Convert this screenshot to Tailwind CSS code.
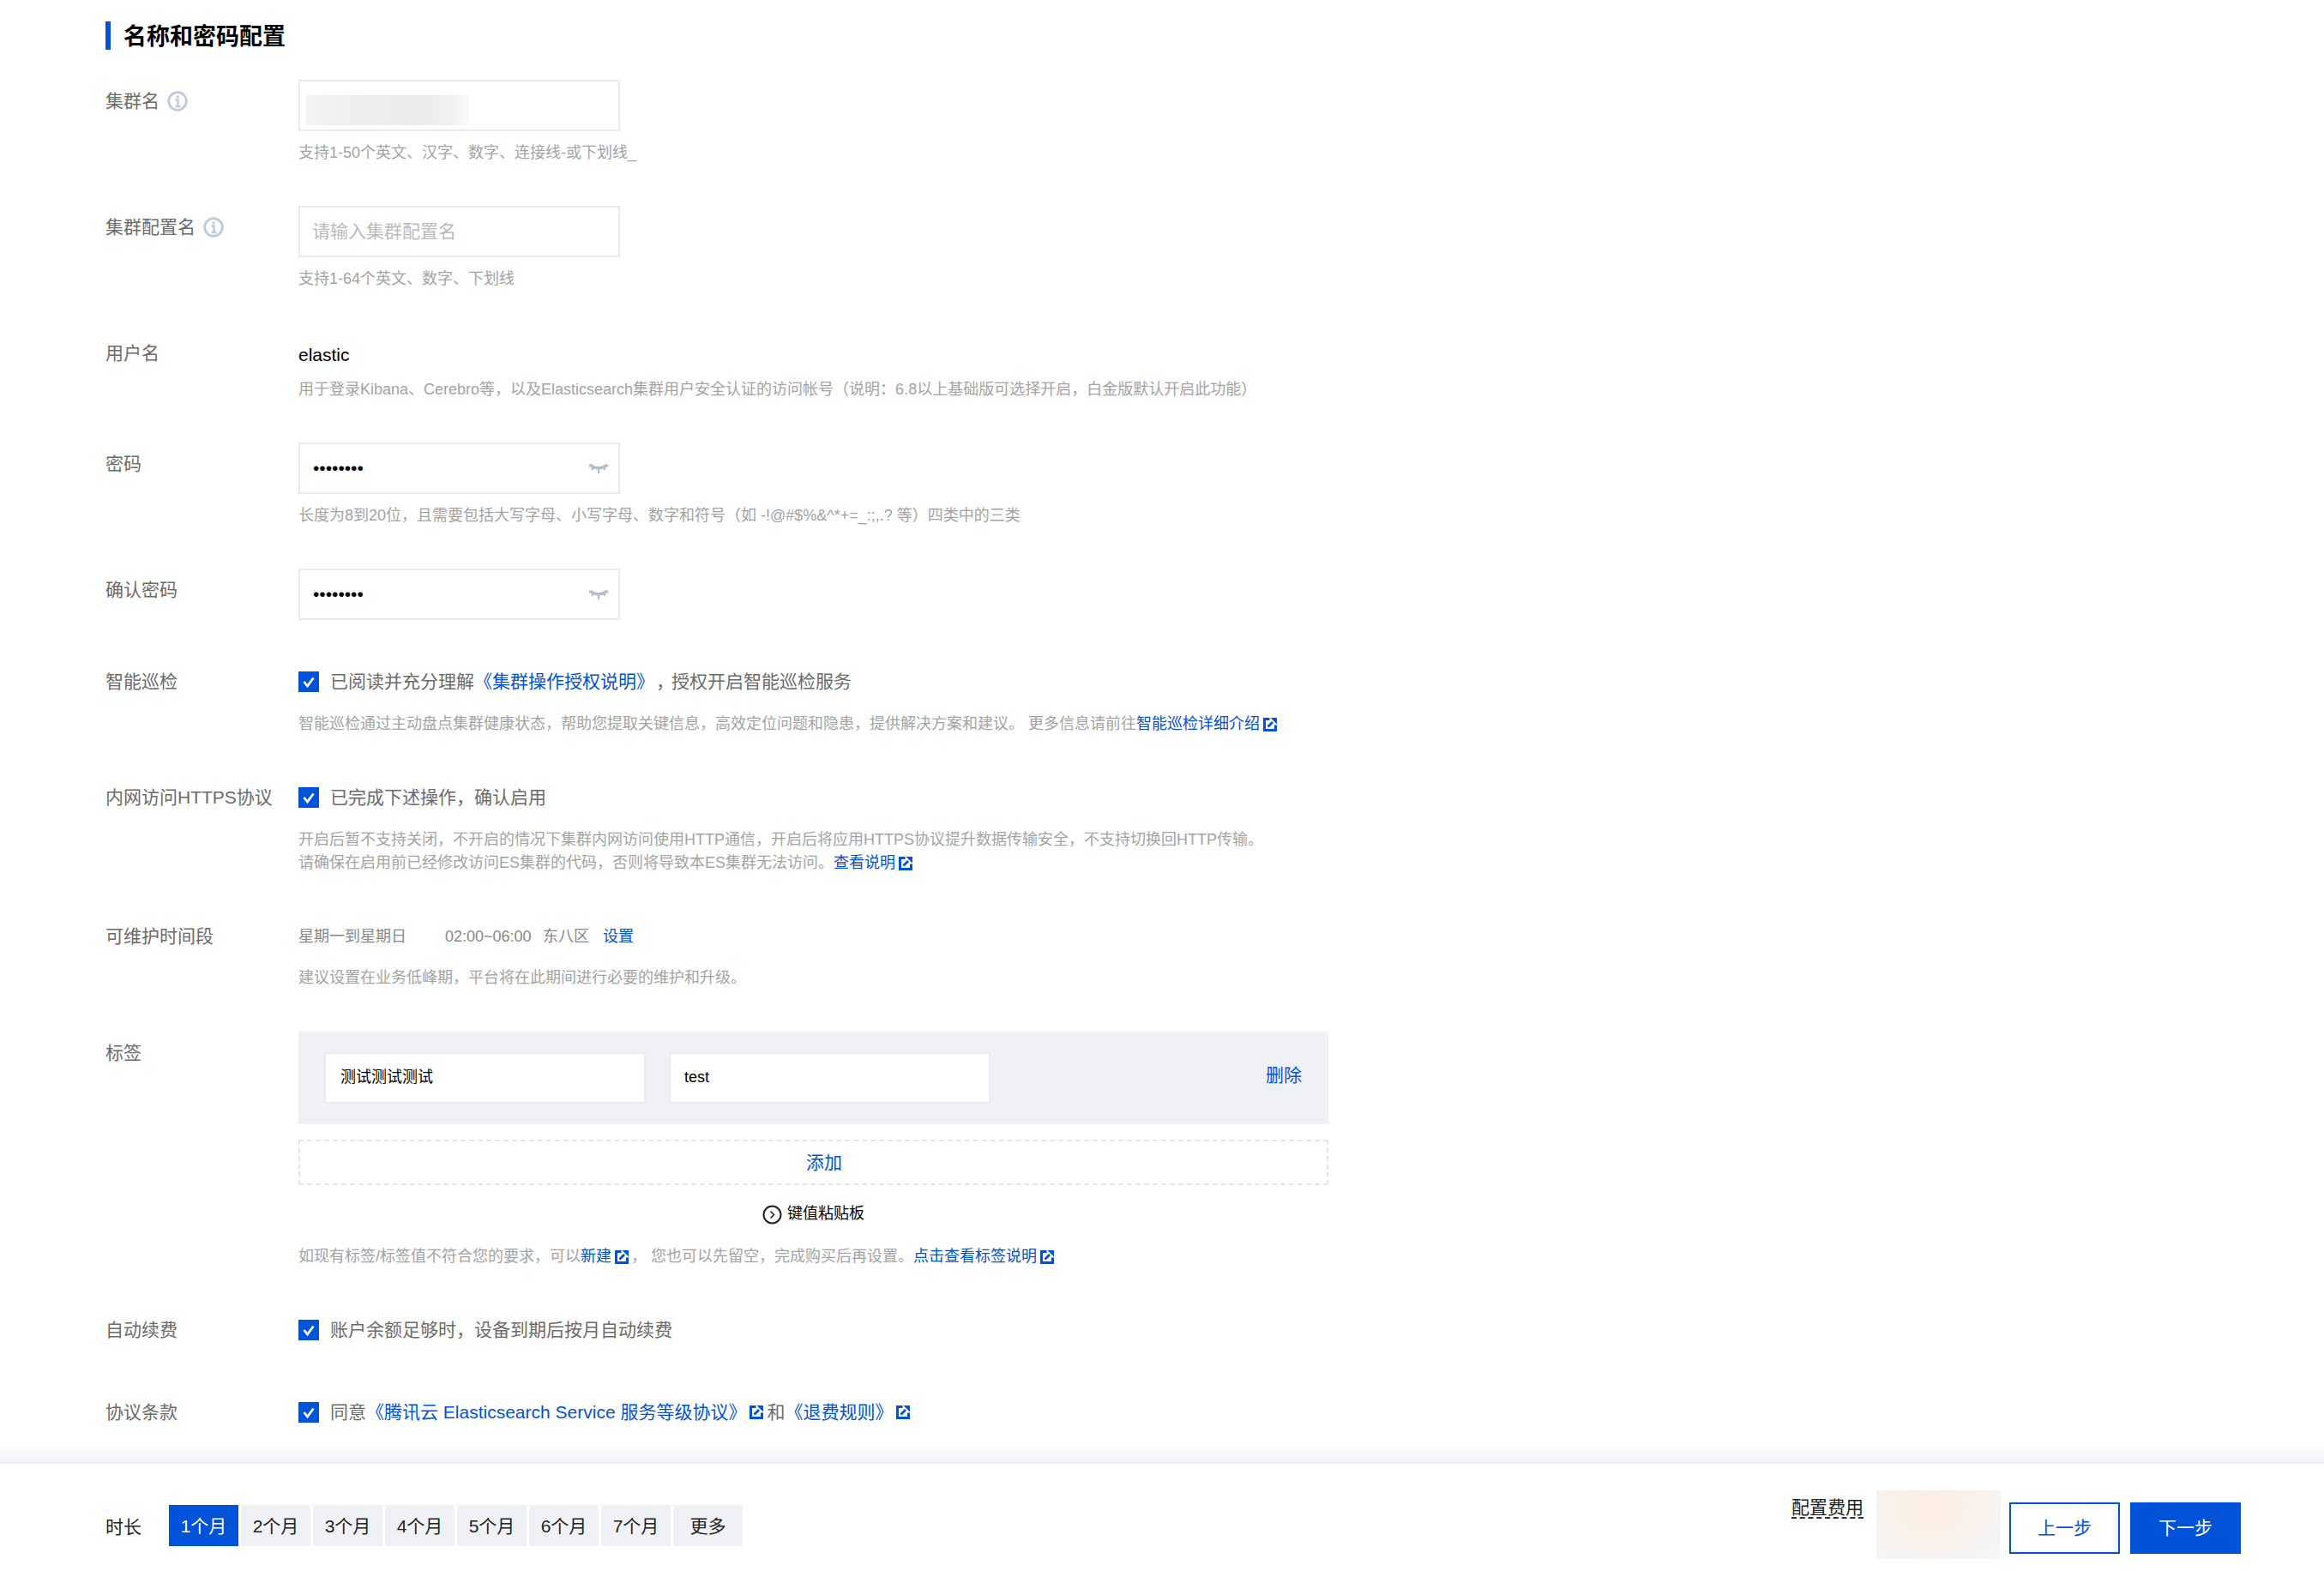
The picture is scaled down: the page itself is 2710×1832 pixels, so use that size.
<!DOCTYPE html>
<html lang="zh-CN">
<head>
  <meta charset="UTF-8">
  <title>名称和密码配置</title>
  <script src="https://cdn.jsdelivr.net/npm/@tailwindcss/browser@4"></script>
</head>
<body class="h-screen overflow-hidden flex flex-col bg-white text-[#6b6b6b] text-[21px] [font-family:'Liberation_Sans','Noto_Sans_CJK_SC',sans-serif]">
  <svg class="hidden">
    <symbol id="ext" viewBox="0 0 16 16">
      <path d="M7.5 1.5H1.5V14.5H14.5V8.5" fill="none" stroke="#0052d9" stroke-width="3"/>
      <path d="M5.5 10.5L11 5" fill="none" stroke="#0052d9" stroke-width="2.8"/>
      <path d="M8.5 0H16V7.5Z" fill="#0052d9"/>
    </symbol>
    <symbol id="info" viewBox="0 0 24 24">
      <circle cx="12" cy="12" r="10.3" fill="none" stroke="#bfcadb" stroke-width="2.8"/>
      <path d="M9.5 10.5H12.5V18M9.5 18H15.5" fill="none" stroke="#bfcadb" stroke-width="2.4"/>
      <rect x="10.6" y="5.5" width="3" height="3" fill="#bfcadb"/>
    </symbol>
    <symbol id="check" viewBox="0 0 24 24">
      <rect width="24" height="24" fill="#0052d9"/>
      <path d="M6.5 12L10.5 17L17.5 7.5" fill="none" stroke="#fff" stroke-width="2.8"/>
    </symbol>
    <symbol id="eyeoff" viewBox="0 0 22 12">
      <path d="M1.5 2C6 7 16 7 20.5 2" fill="none" stroke="#b5bdcc" stroke-width="3.4"/>
      <path d="M11 5V12M5 4L3.5 8M17 4L18.5 8M1 1.5L0 4.5M21 1.5L22 4.5" fill="none" stroke="#b5bdcc" stroke-width="2.2"/>
    </symbol>
  </svg>

  <main class="h-[1685px] shrink-0 pl-[123px]">
    <h2 class="mt-[25px] h-[33px] border-l-[6px] border-[#0052d9] pl-[15px] text-[27px] leading-[37px] font-bold text-black">名称和密码配置</h2>

    <div class="mt-[35px] flex">
      <div class="w-[225px] self-start mt-[10px] leading-[30px] flex items-center gap-[9px]">集群名<svg class="w-[24px] h-[24px]"><use href="#info"/></svg></div>
      <div>
        <div class="relative w-[375px] h-[60px] border-2 border-[#e8ebf0] bg-white">
          <div class="absolute left-[7px] top-[16px] w-[190px] h-[35px] bg-[linear-gradient(90deg,#f3f3f3,#eeeeee_30%,#ebebeb_70%,#f1f1f1_90%,#fbfbfb)]"></div>
        </div>
        <p class="mt-[12px] text-[18px] leading-[27px] text-[#a3a3a3]">支持1-50个英文、汉字、数字、连接线-或下划线_</p>
      </div>
    </div>

    <div class="mt-[48px] flex">
      <div class="w-[225px] self-start mt-[10px] leading-[30px] flex items-center gap-[9px]">集群配置名<svg class="w-[24px] h-[24px]"><use href="#info"/></svg></div>
      <div>
        <input class="block w-[375px] h-[60px] border-2 border-[#e8ebf0] pl-[14px] pr-[15px] outline-none placeholder:text-[#bbbbbb]" placeholder="请输入集群配置名">
        <p class="mt-[12px] text-[18px] leading-[27px] text-[#a3a3a3]">支持1-64个英文、数字、下划线</p>
      </div>
    </div>

    <div class="mt-[48px] flex">
      <div class="w-[225px] mt-[10px] leading-[30px]">用户名</div>
      <div>
        <p class="mt-[12px] leading-[30px] text-black">elastic</p>
        <p class="mt-[12px] text-[18px] leading-[27px] text-[#a3a3a3]">用于登录Kibana、Cerebro等，以及Elasticsearch集群用户安全认证的访问帐号（说明：6.8以上基础版可选择开启，白金版默认开启此功能）</p>
      </div>
    </div>

    <div class="mt-[48px] flex">
      <div class="w-[225px] mt-[10px] leading-[30px]">密码</div>
      <div>
        <div class="flex items-center w-[375px] h-[60px] border-2 border-[#e8ebf0] pl-[15px] pr-[12px]">
          <input type="password" value="password" class="flex-1 min-w-0 outline-none text-black">
          <svg class="w-[22px] h-[12px]"><use href="#eyeoff"/></svg>
        </div>
        <p class="mt-[12px] text-[18px] leading-[27px] text-[#a3a3a3]">长度为8到20位，且需要包括大写字母、小写字母、数字和符号（如 -!@#$%&amp;^*+=_:;,.? 等）四类中的三类</p>
      </div>
    </div>

    <div class="mt-[48px] flex">
      <div class="w-[225px] mt-[10px] leading-[30px]">确认密码</div>
      <div class="flex items-center w-[375px] h-[60px] border-2 border-[#e8ebf0] pl-[15px] pr-[12px]">
        <input type="password" value="password" class="flex-1 min-w-0 outline-none text-black">
        <svg class="w-[22px] h-[12px]"><use href="#eyeoff"/></svg>
      </div>
    </div>

    <div class="mt-[57px] flex">
      <div class="w-[225px] leading-[30px]">智能巡检</div>
      <div>
        <div class="flex items-center gap-[13px] leading-[30px]">
          <svg class="w-[24px] h-[24px]"><use href="#check"/></svg>
          <span class="flex">已阅读并充分理解<span class="text-[#0052d9]">《集群操作授权说明》</span><span class="ml-[2px]">，</span><span class="-ml-[3px]">授权开启智能巡检服务</span></span>
        </div>
        <p class="mt-[21px] flex items-center text-[18px] leading-[27px] text-[#a3a3a3]">智能巡检通过主动盘点集群健康状态，帮助您提取关键信息，高效定位问题和隐患，提供解决方案和建议。 更多信息请前往<span class="text-[#0052d9]">智能巡检详细介绍</span><svg class="ml-[4px] w-[16px] h-[16px]"><use href="#ext"/></svg></p>
      </div>
    </div>

    <div class="mt-[57px] flex">
      <div class="w-[225px] leading-[30px]">内网访问HTTPS协议</div>
      <div>
        <div class="flex items-center gap-[13px] leading-[30px]">
          <svg class="w-[24px] h-[24px]"><use href="#check"/></svg>
          <span>已完成下述操作，确认启用</span>
        </div>
        <div class="mt-[21px] text-[18px] leading-[27px] text-[#a3a3a3]">
          <p>开启后暂不支持关闭，不开启的情况下集群内网访问使用HTTP通信，开启后将应用HTTPS协议提升数据传输安全，不支持切换回HTTP传输。</p>
          <p class="flex items-center">请确保在启用前已经修改访问ES集群的代码，否则将导致本ES集群无法访问。<span class="text-[#0052d9]">查看说明</span><svg class="ml-[4px] w-[16px] h-[16px]"><use href="#ext"/></svg></p>
        </div>
      </div>
    </div>

    <div class="mt-[57px] flex">
      <div class="w-[225px] leading-[30px]">可维护时间段</div>
      <div>
        <div class="flex items-center h-[30px] text-[18px] text-[#888888]">
          <span class="w-[171px]">星期一到星期日</span>
          <span class="w-[114px]">02:00~06:00</span>
          <span class="w-[70px]">东八区</span>
          <span class="text-[#0052d9]">设置</span>
        </div>
        <p class="mt-[20px] text-[18px] leading-[27px] text-[#a3a3a3]">建议设置在业务低峰期，平台将在此期间进行必要的维护和升级。</p>
      </div>
    </div>

    <div class="mt-[49px] flex">
      <div class="w-[225px] mt-[10px] leading-[30px]">标签</div>
      <div class="w-[1201px]">
        <div class="flex items-center h-[108px] bg-[#f0f1f5] px-[30px] text-[18px] text-black">
          <div class="flex items-center w-[375px] h-[60px] border-2 border-[#e8ebf0] bg-white pl-[17px] pb-[1px]">测试测试测试</div>
          <div class="flex items-center w-[375px] h-[60px] ml-[27px] border-2 border-[#e8ebf0] bg-white pl-[16px] pb-[1px]">test</div>
          <span class="ml-auto -mt-[6px] pr-[1px] text-[21px] text-[#0052d9]">删除</span>
        </div>
        <div class="mt-[18px] flex items-center justify-center h-[53px] pl-[25px] border-2 border-dashed border-[#e6e6e6] text-[#0052d9]">添加</div>
        <div class="mt-[23px] flex items-center justify-center gap-[6px] h-[22px] text-[18px] text-black">
          <svg class="w-[23px] h-[23px]" viewBox="0 0 23 23"><circle cx="11.5" cy="11.5" r="10" fill="none" stroke="#222" stroke-width="2"/><path d="M9.5 7.5L13.5 11.5L9.5 15.5" fill="none" stroke="#222" stroke-width="1.6"/></svg>
          <span class="-mt-[2px]">键值粘贴板</span>
        </div>
        <p class="mt-[25px] flex items-center text-[18px] leading-[27px] text-[#a3a3a3]">如现有标签/标签值不符合您的要求，可以<span class="text-[#0052d9]">新建</span><svg class="ml-[4px] w-[16px] h-[16px]"><use href="#ext"/></svg><span class="ml-[3px]">，</span><span class="ml-[5px]">您也可以先留空，完成购买后再设置。</span><span class="text-[#0052d9]">点击查看标签说明</span><svg class="ml-[4px] w-[16px] h-[16px]"><use href="#ext"/></svg></p>
      </div>
    </div>

    <div class="mt-[57px] flex">
      <div class="w-[225px] leading-[30px]">自动续费</div>
      <div class="flex items-center gap-[13px] leading-[30px]">
        <svg class="w-[24px] h-[24px]"><use href="#check"/></svg>
        <span>账户余额足够时，设备到期后按月自动续费</span>
      </div>
    </div>

    <div class="mt-[66px] flex">
      <div class="w-[225px] leading-[30px]">协议条款</div>
      <div class="flex items-center gap-[13px] leading-[30px]">
        <svg class="w-[24px] h-[24px]"><use href="#check"/></svg>
        <div class="flex items-center">
          <span>同意</span>
          <span class="text-[#0052d9]">《腾讯云 Elasticsearch Service 服务等级协议》</span>
          <svg class="ml-[4px] w-[16px] h-[16px]"><use href="#ext"/></svg>
          <span class="ml-[4px]">和</span>
          <span class="text-[#0052d9]">《退费规则》</span>
          <svg class="ml-[4px] w-[16px] h-[16px]"><use href="#ext"/></svg>
        </div>
      </div>
    </div>
  </main>

  <div class="h-[22px] shrink-0 bg-gradient-to-b from-white to-[#eff0f4]"></div>

  <footer class="relative flex-1 flex items-start pl-[123px] pr-[97px] bg-white text-[#222222]">
    <span class="mt-[59px] w-[74px] leading-[30px]">时长</span>
    <div class="mt-[48px] flex gap-[3px]">
      <span class="flex items-center justify-center w-[81px] h-[48px] pt-[2px] bg-[#0052d9] text-white">1个月</span>
      <span class="flex items-center justify-center w-[81px] h-[48px] pt-[2px] bg-[#f0f1f5]">2个月</span>
      <span class="flex items-center justify-center w-[81px] h-[48px] pt-[2px] bg-[#f0f1f5]">3个月</span>
      <span class="flex items-center justify-center w-[81px] h-[48px] pt-[2px] bg-[#f0f1f5]">4个月</span>
      <span class="flex items-center justify-center w-[81px] h-[48px] pt-[2px] bg-[#f0f1f5]">5个月</span>
      <span class="flex items-center justify-center w-[81px] h-[48px] pt-[2px] bg-[#f0f1f5]">6个月</span>
      <span class="flex items-center justify-center w-[81px] h-[48px] pt-[2px] bg-[#f0f1f5]">7个月</span>
      <span class="flex items-center justify-center w-[81px] h-[48px] pt-[2px] bg-[#f0f1f5]">更多</span>
    </div>
    <div class="ml-auto flex items-start">
      <span class="mt-[38px] h-[26px] leading-[25px] border-b-2 border-dashed border-[#333333]">配置费用</span>
      <div class="ml-[15px] mt-[31px] w-[145px] h-[80px] bg-[radial-gradient(ellipse_at_45%_25%,#fdeee2,#f9f1ea_45%,#f5f4f4_75%,#f8f8f9)]"></div>
      <button class="ml-[10px] mt-[45px] w-[129px] h-[60px] border-2 border-[#0052d9] text-[#0052d9]">上一步</button>
      <button class="ml-[12px] mt-[45px] w-[129px] h-[60px] bg-[#0052d9] text-white">下一步</button>
    </div>
  </footer>
</body>
</html>
